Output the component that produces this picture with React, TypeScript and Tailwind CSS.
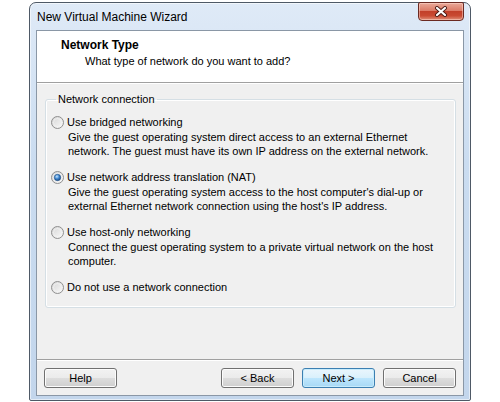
import React from "react";

const font = { fontFamily: '"Liberation Sans", Arial, sans-serif' };

function Radio({ checked }: { checked?: boolean }) {
  return (
    <svg width="13" height="13" viewBox="0 0 13 13" className="shrink-0">
      <defs>
        <linearGradient id="rf" x1="0" y1="0" x2="1" y2="1">
          <stop offset="0" stopColor="#d4d4d4" />
          <stop offset="1" stopColor="#fbfbfb" />
        </linearGradient>
        <radialGradient id="rd" cx="0.4" cy="0.35" r="0.7">
          <stop offset="0" stopColor="#c6e6ff" />
          <stop offset="0.5" stopColor="#3d85cf" />
          <stop offset="1" stopColor="#16427a" />
        </radialGradient>
      </defs>
      <circle cx="6.5" cy="6.5" r="6" fill="url(#rf)" stroke="#8f8f8f" />
      <circle cx="6.5" cy="6.5" r="4" fill="none" stroke="#f4f4f4" strokeOpacity="0.7" />
      {checked && <circle cx="6.5" cy="6.5" r="3.2" fill="url(#rd)" stroke="#1f4f86" strokeWidth="0.6" />}
    </svg>
  );
}

function Option({ label, desc, checked }: { label: string; desc?: string[]; checked?: boolean }) {
  return (
    <div>
      <div className="flex h-[16px] items-center gap-[3px]">
        <Radio checked={checked} />
        <span>{label}</span>
      </div>
      {desc && (
        <div className="pl-[17px] leading-[14px]">
          {desc.map((d) => (
            <div key={d}>{d}</div>
          ))}
        </div>
      )}
    </div>
  );
}

function Button({ children, primary }: { children: React.ReactNode; primary?: boolean }) {
  return (
    <div
      className={
        "flex h-[20px] w-[73px] items-center justify-center rounded-[3px] border text-[11px] " +
        (primary
          ? "border-[#3c7fb1] bg-[linear-gradient(#eaf6fd_0%,#d9f0fc_50%,#bee6fd_50%,#a7d9f5_100%)] shadow-[inset_0_0_0_1px_#c8ecfc]"
          : "border-[#707070] bg-[linear-gradient(#f2f2f2_0%,#ebebeb_50%,#dddddd_50%,#cfcfcf_100%)] shadow-[inset_0_0_0_1px_#fcfcfc]")
      }
    >
      {children}
    </div>
  );
}

export default function App() {
  return (
    <div className="min-h-screen bg-white pl-[29px] pt-[2px] text-black" style={font}>
      <div className="flex h-[399px] w-[442px] flex-col rounded-t-[7px] rounded-b-[2px] border border-[#4e5966] bg-[linear-gradient(#dfeaf7,#cadcf0_40%,#c3d6ec)] px-[6px] pb-[4px] shadow-[inset_0_0_0_1px_rgba(255,255,255,0.55)]">
        <div className="flex h-[27px] shrink-0 items-start justify-between">
          <div className="pl-[1px] pt-[7px] text-[12px] leading-[15px]">New Virtual Machine Wizard</div>
          <div className="-mt-[1px] flex h-[19px] w-[46px] items-center justify-center rounded-b-[4px] rounded-t-[2px] border border-[#6b2a22] bg-[linear-gradient(#eaa999_0%,#dc7c68_45%,#c2402a_50%,#c94a32_75%,#e0907a_100%)] shadow-[inset_0_0_0_1px_rgba(255,220,210,0.5)]">
            <svg width="14" height="11" viewBox="0 0 14 11">
              <path d="M3 2 L11 9 M11 2 L3 9" stroke="#4a1a14" strokeWidth="4" strokeLinecap="round" />
              <path d="M3 2 L11 9 M11 2 L3 9" stroke="#ffffff" strokeWidth="2.2" strokeLinecap="round" />
            </svg>
          </div>
        </div>
        <div className="flex flex-1 flex-col border border-[#8a97a6] bg-[#f0f0f0] text-[11px]">
          <div className="h-[52px] shrink-0 border-b border-[#a0a0a0] bg-white pl-[24px] pt-[7px] leading-[15px] shadow-[0_1px_0_#ffffff]">
            <div className="text-[12px] font-bold">Network Type</div>
            <div className="pl-[24px] pt-[1px]">What type of network do you want to add?</div>
          </div>
          <div className="flex-1 pl-[8px] pt-[9px]">
            <fieldset className="w-[411px] rounded-[3px] border border-[#d5dfe5] px-[5px] pb-[12px] pt-[7px] shadow-[inset_0_0_0_1px_#ffffff]">
              <legend className="ml-[5px] px-[2px] leading-[15px]">Network connection</legend>
              <div className="flex flex-col gap-[11px]">
                <Option
                  label="Use bridged networking"
                  desc={[
                    "Give the guest operating system direct access to an external Ethernet",
                    "network. The guest must have its own IP address on the external network.",
                  ]}
                />
                <Option
                  checked
                  label="Use network address translation (NAT)"
                  desc={[
                    "Give the guest operating system access to the host computer's dial-up or",
                    "external Ethernet network connection using the host's IP address.",
                  ]}
                />
                <Option
                  label="Use host-only networking"
                  desc={["Connect the guest operating system to a private virtual network on the host", "computer."]}
                />
                <Option label="Do not use a network connection" />
              </div>
            </fieldset>
          </div>
          <div className="h-[36px] shrink-0 border-t border-[#a0a0a0] shadow-[inset_0_1px_0_#ffffff]">
            <div className="flex items-center px-[7px] pt-[8px]">
              <Button>Help</Button>
              <div className="ml-auto flex gap-[8px]">
                <Button>&lt; Back</Button>
                <Button primary>Next &gt;</Button>
                <Button>Cancel</Button>
              </div>
            </div>
          </div>
        </div>
      </div>
    </div>
  );
}
